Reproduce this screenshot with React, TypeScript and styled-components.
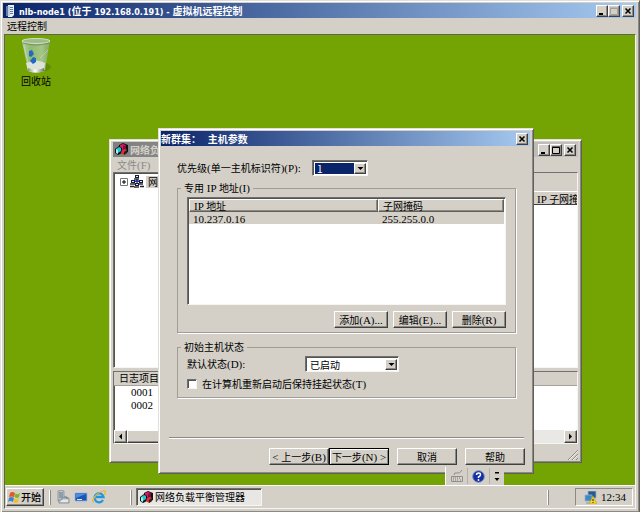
import React from "react";
import styled, { createGlobalStyle, css } from "styled-components";

const FACE = "#d4d0c8";
const SANS = `"Noto Sans CJK SC", "Liberation Sans", sans-serif`;

const GlobalStyle = createGlobalStyle`
  * { box-sizing: border-box; }
  body { margin: 0; background: ${FACE}; }
  body, button, select, input { font-family: ${SANS}; font-size: 10px; line-height: 12px; color: #000; }
`;

const raised = css`
  background: ${FACE};
  border: 1px solid;
  border-color: #fff #404040 #404040 #fff;
  box-shadow: inset -1px -1px #8c8a84;
`;
const sunken = css`
  border: 1px solid;
  border-color: #707070 #f6f5f2 #f6f5f2 #707070;
  box-shadow: inset 1px 1px #55534e;
`;
const windowFrame = css`
  background: ${FACE};
  border: 1px solid;
  border-color: #e2dfd9 #606058 #606058 #e2dfd9;
  box-shadow: inset 1px 1px #fff, inset -1px -1px #8c8a84;
`;

/* Text runs */
const Latin = styled.span`
  font-family: "Liberation Serif", serif;
  font-size: 11px;
  line-height: 10px;
  white-space: pre;
`;
const Mixed = ({ children }: { children: string }) => (
  <>
    {children.split(/([\x20-\x7e]+)/).map((run, i) =>
      /^[\x20-\x7e]+$/.test(run) ? <Latin key={i}>{run}</Latin> : run
    )}
  </>
);

/* Frames */
const RemoteWindow = styled.div`
  ${windowFrame}
  min-height: 100vh;
  padding: 2px 3px 3px 2px;
  display: flex;
  flex-direction: column;
`;
const TitleBar = styled.header<{ $tone?: "active" | "inactive"; $flush?: boolean }>`
  display: flex;
  align-items: center;
  gap: 2px;
  height: 15px;
  padding: ${(p) => (p.$flush ? "0 2px 0 0" : "0 2px")};
  white-space: nowrap;
  overflow: hidden;
  background: ${(p) =>
    p.$tone === "inactive"
      ? "linear-gradient(90deg, #808080, #c4c2be)"
      : "linear-gradient(90deg, #0a246a, #a6caf0)"};
  color: ${(p) => (p.$tone === "inactive" ? FACE : "#fff")};
`;
const Title = styled.h1`
  flex: 1;
  margin: 0;
  font-size: 10px;
  line-height: 14px;
  font-weight: 700;
`;
const RemoteTitle = styled(Title)`
  padding-left: 2px;
  span {
    font-family: "DejaVu Sans Condensed", "DejaVu Sans", sans-serif;
    font-size: 9px;
  }
`;
const CaptionGroup = styled.div`
  display: flex;
  button:last-child:not(:first-child) { margin-left: 2px; }
`;
const CaptionButton = styled.button`
  ${raised}
  width: 12px;
  height: 12px;
  padding: 0;
  display: grid;
  place-items: center;
`;
const MenuBar = styled.nav<{ $muted?: boolean }>`
  display: flex;
  align-items: center;
  height: ${(p) => (p.$muted ? 15 : 16)}px;
  padding: 0 1px;
  color: ${(p) => (p.$muted ? "#8c8a84" : "#000")};
`;
const MenuItem = styled.button`
  border: 0;
  background: none;
  padding: 0 3px;
  color: inherit;
`;
const Screen = styled.div`
  flex: 1;
  margin-left: 1px;
  border: 1px solid;
  border-color: #5c6648 #f6f5f2 #f6f5f2 #5c6648;
  display: flex;
  flex-direction: column;
`;
const Desktop = styled.main`
  flex: 1;
  position: relative;
  min-height: 450px;
  overflow: hidden;
  background: #74a403;
`;
const DesktopShortcut = styled.button`
  position: absolute;
  left: 7px;
  top: 2px;
  width: 48px;
  padding: 0;
  border: 0;
  background: none;
  display: flex;
  flex-direction: column;
  align-items: center;
  gap: 1px;
`;

/* Manager window */
const ManagerWindow = styled.section`
  ${windowFrame}
  position: absolute;
  left: 104px;
  top: 104px;
  width: 473px;
  padding: 2px 3px;
  display: flex;
  flex-direction: column;
`;
const ManagerPanes = styled.div`
  display: grid;
  grid-template-columns: 60px 1fr;
  gap: 3px;
  height: 196px;
`;
const Pane = styled.div`
  ${sunken}
  background: #fff;
  overflow: hidden;
`;
const TreeRow = styled.div`
  display: flex;
  align-items: center;
  gap: 2px;
  padding: 2px 0 2px 6px;
  white-space: nowrap;
`;
const TreeLabel = styled.span`
  background: ${FACE};
  padding: 0 2px;
`;
const DetailSpace = styled.div`
  height: 18px;
  background: ${FACE};
`;
const DetailTable = styled.table`
  width: 100%;
  border-collapse: collapse;
  table-layout: fixed;
  th {
    background: ${FACE};
    font-weight: 400;
    text-align: left;
    white-space: nowrap;
    overflow: hidden;
    height: 13px;
    padding: 0 0 0 4px;
    line-height: 11px;
    border-top: 1px solid #fff;
    border-bottom: 1px solid #404040;
  }
  th:last-child { width: 44px; }
`;
const LogPane = styled(Pane)`
  margin-top: 3px;
  display: flex;
  flex-direction: column;
  height: 73px;
`;
const LogTable = styled.table`
  width: 100%;
  border-collapse: collapse;
  th {
    background: ${FACE};
    text-align: left;
    font-weight: 400;
    padding: 0 5px;
    height: 13px;
    border-bottom: 1px solid #a5a29b;
  }
  td { padding: 0 17px; height: 13px; }
`;
const ScrollTrack = styled.div`
  margin-top: auto;
  display: flex;
  justify-content: space-between;
  height: 13px;
  background: #eae8e4;
`;
const ScrollButton = styled(CaptionButton)`
  width: 13px;
  height: 13px;
`;
const ScrollThumb = styled.div`
  ${raised}
  width: 380px;
  margin-right: auto;
`;
const StatusBar = styled.footer`
  display: flex;
  justify-content: flex-end;
  align-items: flex-end;
  height: 16px;
`;

/* Host parameters dialog */
const Dialog = styled.section`
  ${windowFrame}
  position: absolute;
  left: 153px;
  top: 93px;
  width: 376px;
  padding: 2px 3px 8px 2px;
`;
const DialogBody = styled.div`
  padding: 14px 14px 0 16px;
`;
const FieldRow = styled.div<{ $label: number }>`
  display: grid;
  grid-template-columns: ${(p) => p.$label}px auto;
  justify-content: start;
  align-items: center;
  white-space: nowrap;
`;
const SelectBox = styled.div<{ $width: number }>`
  ${sunken}
  width: ${(p) => p.$width}px;
  height: 16px;
  padding: 2px 1px 1px 2px;
  background: #fff;
  display: flex;
`;
const Select = styled.select<{ $selected?: boolean }>`
  appearance: none;
  flex: 1;
  min-width: 0;
  border: 0;
  border-radius: 0;
  padding: 0 2px;
  outline: 0;
  line-height: 11px;
  background: ${(p) => (p.$selected ? "#0a246a" : "#fff")};
  color: ${(p) => (p.$selected ? "#fff" : "#000")};
`;
const DropMark = styled.span`
  ${raised}
  width: 12px;
  display: grid;
  place-items: center;
`;
const Group = styled.fieldset<{ $top: number }>`
  margin: ${(p) => p.$top}px 0 0;
  padding: 3px 9px 4px;
  min-width: 0;
  border: 1px solid #a09d96;
  box-shadow: 1px 1px #fff;
  legend {
    margin-left: -6px;
    padding: 0 3px;
    white-space: nowrap;
  }
`;
const ListBox = styled(Pane)`
  height: 108px;
  padding: 1px;
`;
const ListTable = styled.table`
  width: 100%;
  border-collapse: separate;
  border-spacing: 0;
  table-layout: fixed;
  th, td { text-align: left; font-weight: 400; padding: 0 4px; }
  th {
    ${raised}
    height: 13px;
    line-height: 10px;
    border-color: #fff #606058 #606058 #fff;
  }
  th:first-child { width: 60%; }
  td { background: ${FACE}; height: 12px; line-height: 11px; }
`;
const ButtonRow = styled.div<{ $top: number; $gap: number }>`
  display: flex;
  justify-content: flex-end;
  gap: ${(p) => p.$gap}px;
  margin-top: ${(p) => p.$top}px;
`;
const Button = styled.button<{ $wide?: boolean; $primary?: boolean }>`
  ${raised}
  width: ${(p) => (p.$wide ? 60 : 54)}px;
  height: 17px;
  padding: 0;
  white-space: nowrap;
  ${(p) => p.$primary && css`border-color: #000; box-shadow: inset 1px 1px #fff, inset -1px -1px #8c8a84;`}
`;
const PagePair = styled.div`
  display: flex;
`;
const CheckLabel = styled.label`
  display: flex;
  align-items: center;
  gap: 5px;
  margin: 6px 0 3px;
  white-space: nowrap;
`;
const CheckBox = styled.input`
  ${sunken}
  appearance: none;
  width: 10px;
  height: 10px;
  margin: 0;
  background: #fff;
`;
const Divider = styled.hr`
  margin: 39px -8px 0;
  border: 0;
  height: 2px;
  background: #8c8a84;
  border-bottom: 1px solid #fff;
`;
const WizardButtons = styled(ButtonRow)`
  margin-right: -9px;
`;

/* Task bar */
const LanguageBar = styled.div`
  position: absolute;
  right: 131px;
  bottom: 0;
  height: 18px;
  width: 59px;
  background: ${FACE};
  border-left: 1px solid #fff;
  display: grid;
  grid-template-columns: 21px 22px 1fr;
  align-items: center;
  button {
    border: 0;
    background: none;
    height: 16px;
    padding: 0;
    display: grid;
    place-items: center;
  }
  button + button { border-left: 1px solid #b4b1aa; }
`;
const TaskBar = styled.footer`
  display: flex;
  align-items: center;
  height: 23px;
  padding: 2px 2px 2px 1px;
  background: ${FACE};
  border-top: 1px solid #fff;
`;
const StartButton = styled.button`
  ${raised}
  display: flex;
  align-items: center;
  gap: 1px;
  width: 38px;
  height: 18px;
  padding: 0 1px;
  font-weight: 500;
  white-space: nowrap;
`;
const Grip = styled.span`
  width: 2px;
  height: 15px;
  background: #fff;
  border-right: 1px solid #8c8a84;
`;
const QuickLaunch = styled.div`
  display: flex;
  gap: 4px;
  margin: 0 24px 0 5px;
  button { border: 0; background: none; padding: 0; width: 14px; height: 14px; }
`;
const LaunchArea = styled.div`
  display: flex;
  align-items: center;
  margin-left: 5px;
`;
const TaskButton = styled.button`
  ${sunken}
  display: flex;
  align-items: center;
  gap: 2px;
  width: 126px;
  height: 18px;
  margin-left: 4px;
  padding: 0 3px;
  background: #e9e7e3;
  white-space: nowrap;
`;
const Tray = styled.div`
  display: flex;
  align-items: center;
  justify-content: flex-end;
  gap: 4px;
  width: 58px;
  height: 18px;
  margin-left: 26px;
  padding: 0 6px;
  border: 1px solid;
  border-color: #8c8a84 #fff #fff #8c8a84;
`;
const Spacer = styled.span`
  flex: 1;
`;

/* Drawings */
const Svg = ({ w, h, children }: { w: number; h: number; children: React.ReactNode }) => (
  <svg width={w} height={h} viewBox={`0 0 ${w} ${h}`} aria-hidden="true" display="block">
    {children}
  </svg>
);
const MinimizeIcon = () => <Svg w={8} h={8}><path d="M1 6h4v2H1z" /></Svg>;
const MaximizeIcon = ({ color = "#000" }: { color?: string }) => (
  <Svg w={8} h={8}><path d="M.5 1.500h7v6h-7zM0 1h8" fill="none" stroke={color} /></Svg>
);
const CloseIcon = () => <Svg w={8} h={8}><path d="M1.500 1.500l5 5M6.500 1.500l-5 5" stroke="#000" strokeWidth="1.500" /></Svg>;
const ArrowDown = () => <Svg w={7} h={5}><path d="M.5 1h6l-3 3z" /></Svg>;
const ArrowLeft = () => <Svg w={5} h={7}><path d="M4 .5v6l-3-3z" /></Svg>;
const ArrowRight = () => <Svg w={5} h={7}><path d="M1 .5v6l3-3z" /></Svg>;
const ServerIcon = () => (
  <Svg w={10} h={13}>
    <path d="M3 1h6v10l-2 2H3z" fill="#e9f0f7" />
    <path d="M4 2v10" stroke="#7f9cbd" strokeWidth=".8" />
    <path d="M5 3.500h3M5 5.500h3M5 7.500h3M5 9.500h3" stroke="#4a6b94" strokeWidth=".9" />
    <path d="M1 3h2M1 5h2M1 7h2M1 9h2M1 11h2" stroke="#c7d7e8" />
  </Svg>
);
const ClusterIcon = () => (
  <Svg w={13} h={13}>
    <path d="M4 2l4-2 5 2v7l-4 2-5-2z" fill="#111" />
    <path d="M5 2l3-1 3 1v4l-3 1-3-2z" fill="#d41c62" />
    <path d="M8 3l3-1v5L8 8z" fill="#7c0c45" />
    <path d="M0 6l4-3 3 2v5l-4 2-3-2z" fill="#111" />
    <path d="M1 6l3-2 2 1v3l-3 2-2-1z" fill="#20c5cc" />
    <path d="M1 6l2 1v4l-2-1z" fill="#a6f2f0" />
    <path d="M7 7l3-1 2 1v3l-3 2-3-2z" fill="#e32938" />
    <path d="M9 9l3-2v3l-3 2z" fill="#222" />
  </Svg>
);
const NetworkIcon = () => (
  <Svg w={14} h={13}>
    <path d="M7 4v4M3 8l4-3 4 3" stroke="#2637a5" fill="none" strokeWidth="1.300" />
    {[[5, 0], [1, 5], [9, 5], [5, 8]].map(([x, y]) => (
      <g key={`${x}-${y}`}>
        <path d={`M${x} ${y}h4v3h-4z`} fill="#151a38" />
        <path d={`M${x + 1} ${y + 1}h2v1h-2z`} fill="#dceaff" />
        <path d={`M${x - 1} ${y + 4}h5`} stroke="#222" strokeWidth="1.400" />
      </g>
    ))}
    <path d="M0 11.500h4M10 11.500h4" stroke="#222" strokeWidth="1.300" />
  </Svg>
);
const ExpandIcon = () => (
  <Svg w={8} h={8}><path d="M.5.5h7v7h-7z" fill="#fff" stroke="#777" /><path d="M2 4h4M4 2v4" stroke="#000" /></Svg>
);
const RecycleBinIcon = () => (
  <Svg w={32} h={37}>
    <defs>
      <linearGradient id="glass"><stop stopColor="#c3d6ba" /><stop offset=".3" stopColor="#93bd79" /><stop offset=".7" stopColor="#a9c996" /><stop offset="1" stopColor="#83a965" /></linearGradient>
      <linearGradient id="metal"><stop stopColor="#8a9586" /><stop offset=".45" stopColor="#fff" /><stop offset="1" stopColor="#6f7968" /></linearGradient>
    </defs>
    <ellipse cx="24" cy="30" rx="7" ry="4" fill="#557f08" opacity=".6" />
    <path d="M2 4h28l-5 29q-8 4-17 0z" fill="url(#glass)" opacity=".9" />
    <path d="M6 26q10-5 19 0l-1 8q-8 3-16 0z" fill="#dce3d7" />
    <path d="M8 31q8 3 16 0v3q-8 3-16 0z" fill="url(#metal)" />
    <ellipse cx="16" cy="4" rx="14" ry="2.500" fill="#9dbd85" stroke="#d3ddcc" />
    <path d="M3 6q13 4 26 0" stroke="#6c825b" strokeWidth=".8" fill="none" />
    <path d="M9 14l3-1 2 4-3 3-2-1zM13 20l3 1v4l-3 2-3-3z" fill="#2269c3" />
    <path d="M28 13l-8 8M4 9l4 16" stroke="#d8e6ce" strokeWidth=".7" opacity=".7" />
  </Svg>
);
const WindowsFlag = () => (
  <Svg w={12} h={13}>
    <path d="M2 2q2-2 5 0L6 6Q3 5 1 6z" fill="#e25922" />
    <path d="M7.500 2.500Q10 4 12 2l-1 4q-2 2-4.500 0z" fill="#79b82d" />
    <path d="M1 7q2-2 5 0l-1 4q-3-2-5 0z" fill="#3d83d4" />
    <path d="M6.500 7.500Q9 9 11 7l-1 4q-2 2-4.500 0z" fill="#f4bd20" />
  </Svg>
);
const ServerManagerIcon = () => (
  <Svg w={14} h={14}>
    <path d="M2 1l3-1 3 1v10H2z" fill="#b8c2c9" stroke="#7e8b93" strokeWidth=".7" />
    <path d="M3 3h4M3 5h4M3 7h4" stroke="#526471" strokeWidth=".8" />
    <path d="M6 8h7v5H3v-3h3z" fill="#c7d1d5" stroke="#6a7b84" strokeWidth=".7" />
    <path d="M5 11h7" stroke="#fff" /><path d="M8 7h3v2" fill="none" stroke="#6a7b84" />
  </Svg>
);
const ShowDesktopIcon = () => (
  <Svg w={14} h={14}>
    <path d="M1 3h12v8H1z" fill="#1c55b4" stroke="#9db7dc" strokeWidth=".8" />
    <path d="M2 4h10L2 8z" fill="#4f8be0" /><path d="M2 12h11" stroke="#c0c7ce" /><path d="M3 9h5v1H3z" fill="#dce9fa" />
  </Svg>
);
const ExplorerIcon = () => (
  <Svg w={14} h={14}>
    <path d="M11 10a4.500 4.500 0 1 1 .5-3H4" fill="none" stroke="#2197de" strokeWidth="2.300" />
    <path d="M2 12C-2 12 5 2 11 1c4-1 2 3 1 4" fill="none" stroke="#edb632" strokeWidth="1.200" />
  </Svg>
);
const KeyboardIcon = () => (
  <Svg w={14} h={13}>
    <path d="M1.500 6.500h11v5h-11z" fill="#d7d4ce" stroke="#918f89" />
    <path d="M3 8h8M3 10h1M5 10h4M10 10h1" stroke="#77756f" strokeDasharray="1 1" />
    <path d="M4 5q0-3 3-2t5-3" stroke="#918f89" fill="none" />
  </Svg>
);
const HelpIcon = () => (
  <Svg w={13} h={13}>
    <circle cx="6.500" cy="6.500" r="5.800" fill="#132fa4" stroke="#7c8ebd" />
    <path d="M4.500 5q0-2 2-2t2 1.700q0 1-2 2.300v1" fill="none" stroke="#fff" strokeWidth="1.500" /><circle cx="6.500" cy="10" r=".9" fill="#fff" />
  </Svg>
);
const LanguageOptionsIcon = () => <Svg w={6} h={12}><path d="M1 2h4v1.500H1zM.5 8h5L3 11z" /></Svg>;
const TrayIcon = () => (
  <Svg w={13} h={13}>
    <path d="M4 0h8v7H4z" fill="#265b91" stroke="#9bb2c3" strokeWidth=".8" />
    <path d="M1 4h7v6H1z" fill="#3789c8" stroke="#9bb2c3" strokeWidth=".8" /><path d="M2 12h5" stroke="#8899a5" />
    <path d="M9 5l4 8H5z" fill="#f6d42e" stroke="#bf9a15" strokeWidth=".6" /><path d="M9 8v2M9 11v1" stroke="#222" />
  </Svg>
);
const ResizeGrip = () => (
  <Svg w={11} h={11}>
    <path d="M1 11L11 1M5 11l6-6M9 11l2-2" stroke="#8c8a84" /><path d="M2 11l9-9M6 11l5-5" stroke="#fff" strokeWidth=".6" />
  </Svg>
);

const WindowControls = ({ locked }: { locked?: boolean }) => (
  <CaptionGroup>
    <CaptionButton aria-label="最小化"><MinimizeIcon /></CaptionButton>
    <CaptionButton aria-label="最大化" disabled={locked}><MaximizeIcon color={locked ? "#a3a09a" : "#000"} /></CaptionButton>
    <CaptionButton aria-label="关闭"><CloseIcon /></CaptionButton>
  </CaptionGroup>
);

const ClusterManager = () => (
  <ManagerWindow>
    <TitleBar $tone="inactive">
      <ClusterIcon />
      <Title as="h2">网络负载平衡管理器</Title>
      <WindowControls />
    </TitleBar>
    <MenuBar $muted><MenuItem><Mixed>文件(F)</Mixed></MenuItem></MenuBar>
    <ManagerPanes>
      <Pane>
        <TreeRow><ExpandIcon /><NetworkIcon /><TreeLabel>网络</TreeLabel></TreeRow>
      </Pane>
      <Pane>
        <DetailSpace />
        <DetailTable>
          <thead><tr><th aria-label="主机" /><th><Mixed>IP 子网掩码</Mixed></th></tr></thead>
        </DetailTable>
      </Pane>
    </ManagerPanes>
    <LogPane>
      <LogTable>
        <thead><tr><th>日志项目</th></tr></thead>
        <tbody>{["0001", "0002"].map((n) => <tr key={n}><td><Mixed>{n}</Mixed></td></tr>)}</tbody>
      </LogTable>
      <ScrollTrack>
        <ScrollButton aria-label="向左滚动"><ArrowLeft /></ScrollButton>
        <ScrollThumb />
        <ScrollButton aria-label="向右滚动"><ArrowRight /></ScrollButton>
      </ScrollTrack>
    </LogPane>
    <StatusBar><ResizeGrip /></StatusBar>
  </ManagerWindow>
);

const HostParameters = () => (
  <Dialog role="dialog" aria-labelledby="dialog-title">
    <TitleBar $flush>
      <Title as="h2" id="dialog-title">新群集：&nbsp;&nbsp;&nbsp;主机参数</Title>
      <CaptionButton aria-label="关闭"><CloseIcon /></CaptionButton>
    </TitleBar>
    <DialogBody>
      <FieldRow $label={135}>
        <label htmlFor="priority"><Mixed>优先级(单一主机标识符)(P):</Mixed></label>
        <SelectBox $width={56}>
          <Select id="priority" $selected defaultValue="1"><option>1</option><option>2</option></Select>
          <DropMark><ArrowDown /></DropMark>
        </SelectBox>
      </FieldRow>
      <Group $top={6}>
        <legend><Mixed>专用 IP 地址(I)</Mixed></legend>
        <ListBox>
          <ListTable>
            <thead><tr><th><Mixed>IP 地址</Mixed></th><th>子网掩码</th></tr></thead>
            <tbody><tr><td><Mixed>10.237.0.16</Mixed></td><td><Mixed>255.255.0.0</Mixed></td></tr></tbody>
          </ListTable>
        </ListBox>
        <ButtonRow $top={6} $gap={5}>
          <Button><Mixed>添加(A)...</Mixed></Button>
          <Button><Mixed>编辑(E)...</Mixed></Button>
          <Button><Mixed>删除(R)</Mixed></Button>
        </ButtonRow>
      </Group>
      <Group $top={8}>
        <legend>初始主机状态</legend>
        <FieldRow $label={118}>
          <label htmlFor="state"><Mixed>默认状态(D):</Mixed></label>
          <SelectBox $width={94}>
            <Select id="state" defaultValue="已启动"><option>已启动</option><option>已停止</option></Select>
            <DropMark><ArrowDown /></DropMark>
          </SelectBox>
        </FieldRow>
        <CheckLabel><CheckBox type="checkbox" /><span><Mixed>在计算机重新启动后保持挂起状态(T)</Mixed></span></CheckLabel>
      </Group>
      <Divider />
      <WizardButtons $top={9} $gap={8}>
        <PagePair>
          <Button $wide><Mixed>{"< 上一步(B)"}</Mixed></Button>
          <Button $wide $primary><Mixed>{"下一步(N) >"}</Mixed></Button>
        </PagePair>
        <Button $wide>取消</Button>
        <Button $wide>帮助</Button>
      </WizardButtons>
    </DialogBody>
  </Dialog>
);

export default function App() {
  return (
    <>
      <GlobalStyle />
      <RemoteWindow lang="zh-CN">
        <TitleBar>
          <ServerIcon />
          <RemoteTitle><Mixed>nlb-node1 (位于 192.168.0.191) - 虚拟机远程控制</Mixed></RemoteTitle>
          <WindowControls locked />
        </TitleBar>
        <MenuBar><MenuItem>远程控制</MenuItem></MenuBar>
        <Screen>
          <Desktop>
            <DesktopShortcut><RecycleBinIcon /><span>回收站</span></DesktopShortcut>
            <ClusterManager />
            <HostParameters />
            <LanguageBar>
              <button aria-label="键盘"><KeyboardIcon /></button>
              <button aria-label="帮助"><HelpIcon /></button>
              <button aria-label="选项"><LanguageOptionsIcon /></button>
            </LanguageBar>
          </Desktop>
          <TaskBar>
            <StartButton><WindowsFlag />开始</StartButton>
            <LaunchArea>
              <Grip />
              <QuickLaunch>
                <button aria-label="服务器管理器"><ServerManagerIcon /></button>
                <button aria-label="显示桌面"><ShowDesktopIcon /></button>
                <button aria-label="Internet Explorer"><ExplorerIcon /></button>
              </QuickLaunch>
              <Grip />
            </LaunchArea>
            <TaskButton><ClusterIcon />网络负载平衡管理器</TaskButton>
            <Spacer />
            <Grip />
            <Tray><TrayIcon /><time><Mixed>12:34</Mixed></time></Tray>
          </TaskBar>
        </Screen>
      </RemoteWindow>
    </>
  );
}
